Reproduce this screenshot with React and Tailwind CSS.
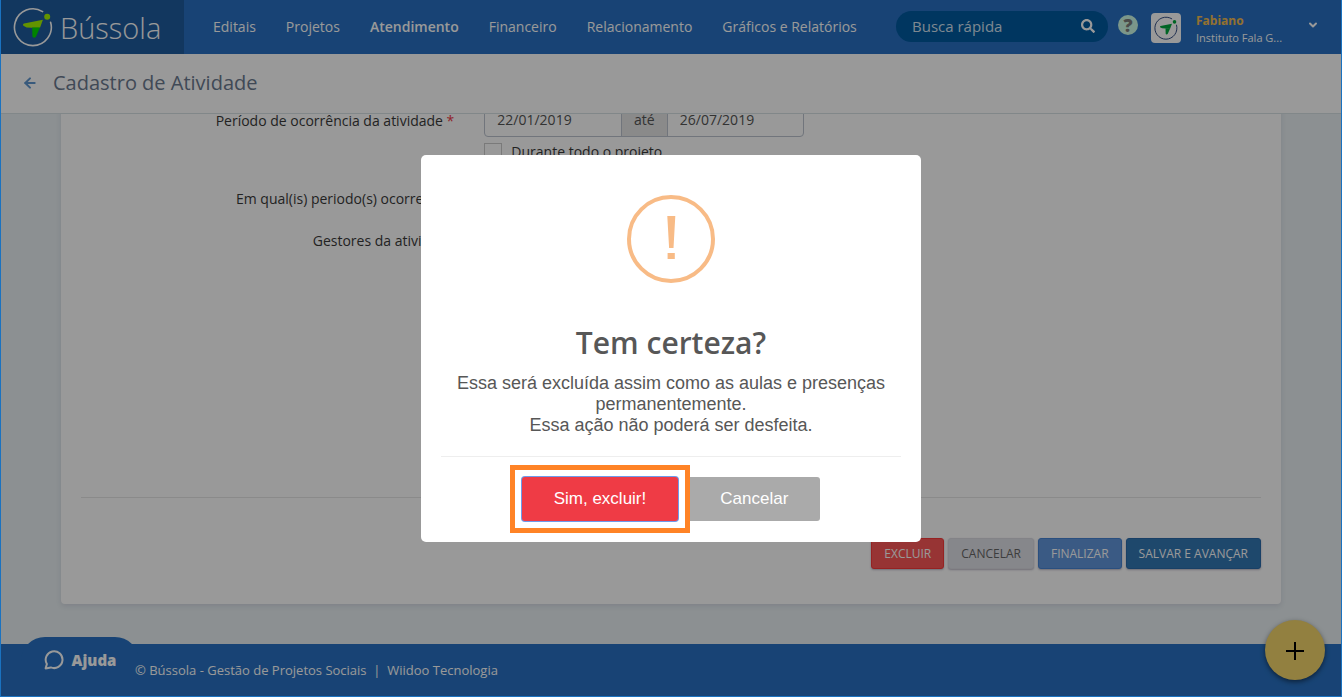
import React from 'react';
import { FaSearch } from 'react-icons/fa';
import { ArrowLeft, ChevronDown } from 'lucide-react';

const navItems = [
  { label: 'Editais' },
  { label: 'Projetos' },
  { label: 'Atendimento', active: true },
  { label: 'Financeiro' },
  { label: 'Relacionamento' },
  { label: 'Gráficos e Relatórios' },
];

const actions = [
  { label: 'Excluir', className: 'bg-[#fc5858] border-[#fa3a3a] text-white' },
  { label: 'Cancelar', className: 'bg-[#e0e1e8] border-[#dadbe2] text-[#666666]' },
  { label: 'Finalizar', className: 'bg-[#6296dc] border-[#4684d4] text-white' },
  { label: 'Salvar e avançar', className: 'bg-[#3378b5] border-[#2a6cab] text-white' },
];

const Compass = ({ className, ring, top, bottom, dot }) => (
  <svg viewBox="0 0 40 40" className={className} fill="none" aria-hidden="true">
    <path
      d="M29.6 4.6A18.4 18.4 0 1 0 37.6 15.2"
      stroke={ring}
      strokeWidth="1.6"
      strokeLinecap="round"
    />
    <path d="M29.9 12.8 11 16.5c-1.3.4-1.3 2-.2 2.6l2.8 1.4 5.6.2h7.8z" fill={top} />
    <path d="M27 20.6h-7.8l.2 8.4c.2 2 2.6 2.2 3.6.4z" fill={bottom} />
    <circle cx="34.2" cy="9.8" r="3" fill={dot} />
  </svg>
);

const Topbar = () => (
  <header className="flex h-[54px] shrink-0 items-center bg-[#2871c3] text-white">
    <a href="#" className="flex h-full w-[184px] shrink-0 items-center gap-[7px] bg-[#1e5c9e] pl-[13px]">
      <Compass className="h-10 w-10" ring="#fff" top="#a6f500" bottom="#00dc00" dot="#a6f500" />
      <span className="text-[29px] font-light leading-none">Bússola</span>
    </a>
    <nav className="flex grow items-center gap-[30px] pl-[29px] text-sm">
      {navItems.map((item) => (
        <a key={item.label} href="#" className={item.active ? 'font-semibold' : ''}>
          {item.label}
        </a>
      ))}
    </nav>
    <div className="flex items-center pb-px">
      <form className="flex h-[31px] w-[212px] items-center rounded-full bg-[#005aa0] pb-px pl-4 pr-[13px]">
        <input
          type="text"
          aria-label="Busca rápida"
          placeholder="Busca rápida"
          className="w-0 grow bg-transparent text-[15px] outline-none placeholder:text-[#d3e3f1]"
        />
        <button type="button" aria-label="Buscar">
          <FaSearch className="h-[14px] w-[14px]" />
        </button>
      </form>
      <button
        type="button"
        aria-label="Dúvidas"
        className="mb-1 ml-[10px] flex h-5 w-5 items-center justify-center rounded-full bg-[#cdfbe6] text-lg font-extrabold leading-none text-[#7c7c7c]"
      >
        ?
      </button>
      <span className="ml-[13px] mt-[2px] flex h-[30px] w-[30px] items-center justify-center rounded-sm bg-white">
        <Compass className="h-6 w-6" ring="#2b4780" top="#00a83c" bottom="#00a83c" dot="#00a83c" />
      </span>
      <div className="ml-[15px] w-[111px] pt-1 leading-[17px]">
        <div className="text-[12px] font-bold text-[#f5bd4f]">Fabiano</div>
        <div className="text-[11px]">Instituto Fala G...</div>
      </div>
      <button type="button" aria-label="Menu do usuário" className="mb-1 mr-[23px]">
        <ChevronDown className="h-3 w-3" strokeWidth={4} />
      </button>
    </div>
  </header>
);

const PageTitle = () => (
  <div className="flex h-[60px] shrink-0 items-center gap-[15px] border-b border-[#d8e2e5] bg-white pb-[2px] pl-[22px]">
    <a href="#" aria-label="Voltar" className="text-[#5f97cf]">
      <ArrowLeft className="h-4 w-4" strokeWidth={3} />
    </a>
    <h1 className="text-xl text-[#6b7a90]">Cadastro de Atividade</h1>
  </div>
);

const Row = ({ label, htmlFor, required, children, className }) => (
  <div className={`-mx-[15px] flex ${className}`}>
    <label htmlFor={htmlFor} className="w-1/3 shrink-0 px-[15px] pt-2 text-right leading-5">
      {label}
      {required && <span className="text-[#f03a47]"> *</span>}
    </label>
    <div className="grow px-[15px]">{children}</div>
  </div>
);

const ActivityForm = () => (
  <form className="flex shrink-0 grow flex-col rounded bg-white px-5 pb-[35px] pt-5 text-sm text-[#3a3a3a] shadow-[0_2px_5px_rgba(90,80,130,0.15)]">
    <Row
      label="Período de ocorrência da atividade"
      htmlFor="inicio"
      className="h-[78px]"
      required
    >
      <div className="flex h-[34px] w-[320px] rounded border border-[#bcc3cf] text-[#555555]">
        <input id="inicio" type="text" defaultValue="22/01/2019" className="w-0 grow px-3" />
        <span className="flex w-[47px] items-center justify-center border-x border-[#bcc3cf] bg-[#e6e6e6]">
          até
        </span>
        <input
          type="text"
          aria-label="Data final"
          defaultValue="26/07/2019"
          className="w-0 grow px-3"
        />
      </div>
      <label className="mt-[5px] flex items-center gap-[9px]">
        <input
          type="checkbox"
          className="h-[18px] w-[18px] appearance-none border border-[#cccccc] bg-white"
        />
        Durante todo o projeto
      </label>
    </Row>
    <Row label="Em qual(is) periodo(s) ocorrerá?" className="h-[42px]" required />
    <Row label="Gestores da atividade" className="h-[42px]" />
    <div className="mt-[232px] flex grow items-end justify-end gap-1 border-t border-[#e6e6e6] pt-10">
      {actions.map((action) => (
        <button
          key={action.label}
          type="button"
          className={`h-[31px] rounded-[3px] border px-3 text-[12px] uppercase shadow-[0_1px_2px_rgba(60,50,90,0.35)] ${action.className}`}
        >
          {action.label}
        </button>
      ))}
    </div>
  </form>
);

const Footer = () => (
  <footer className="relative flex h-[53px] shrink-0 items-center bg-[#2871c3] pl-[135px] text-[13px] text-white">
    <button
      type="button"
      className="absolute -top-[7px] left-[21px] flex h-[46px] w-[118px] items-center justify-center gap-2 rounded-t-3xl bg-[#2871c3] text-[15px] font-extrabold"
    >
      <svg viewBox="0 0 20 20" className="h-5 w-5" fill="none" stroke="currentColor" strokeWidth="2">
        <path d="M1.6 18.4 2.9 14A8.4 8.4 0 1 1 6.8 17.4Z" strokeLinejoin="round" />
      </svg>
      Ajuda
    </button>
    <p className="relative">© Bússola - Gestão de Projetos Sociais &nbsp;|&nbsp; Wiidoo Tecnologia</p>
    <button
      type="button"
      aria-label="Adicionar"
      className="absolute -top-6 right-[17px] flex h-[60px] w-[60px] items-center justify-center rounded-full bg-[#f4d56c] pt-[2px] text-black shadow-[0_2px_5px_rgba(0,0,0,0.5)]"
    >
      <svg viewBox="0 0 18 18" className="h-[18px] w-[18px]" stroke="currentColor" strokeWidth="2">
        <path d="M9 0v18M0 9h18" />
      </svg>
    </button>
  </footer>
);

const ConfirmDialog = () => (
  <div className="fixed inset-0 z-10 flex items-center justify-center bg-black/40">
    <div
      role="dialog"
      aria-modal="true"
      aria-labelledby="confirm-title"
      className="flex w-[500px] flex-col items-center rounded-[5px] bg-white px-5 pb-[9px] pt-10 text-center font-['Liberation_Sans',Arial,sans-serif] text-[#575757]"
    >
      <svg viewBox="0 0 88 88" className="h-[88px] w-[88px]" fill="none" aria-hidden="true">
        <circle cx="44" cy="44" r="42" stroke="#f8bb86" strokeWidth="4" />
        <path d="M40.3 21h8l-1.8 32h-4.4zM40.6 58h7.2v6h-7.2z" fill="#f8bb86" />
      </svg>
      <h2
        id="confirm-title"
        className="mt-[30px] font-['Open_Sans',sans-serif] text-[30px] font-semibold leading-[60px]"
      >
        Tem certeza?
      </h2>
      <p className="text-lg leading-[21px]">
        Essa será excluída assim como as aulas e presenças permanentemente.
        <br />
        Essa ação não poderá ser desfeita.
      </p>
      <hr className="mt-5 w-full border-[#eeeeee]" />
      <div className="mt-2 flex items-center pr-3 text-[17px] text-white">
        <div className="border-[5px] border-[#ff8326] p-[7px]">
          <button
            type="button"
            className="block h-11 rounded-[3px] bg-[#ef3b45] px-8 font-medium ring-1 ring-[#6f9bea]"
          >
            Sim, excluir!
          </button>
        </div>
        <button type="button" className="h-11 rounded-r-[3px] bg-[#aaaaaa] pl-[30px] pr-8 font-medium">
          Cancelar
        </button>
      </div>
    </div>
  </div>
);

const App = () => {
  return (
    <div className="flex h-screen flex-col overflow-hidden bg-[#e9f0f3] font-['Open_Sans',sans-serif]">
      <Topbar />
      <PageTitle />
      <main className="flex min-h-0 grow flex-col justify-end overflow-hidden px-[61px] pb-10">
        <ActivityForm />
      </main>
      <Footer />
      <ConfirmDialog />
      {/* window frame */}
      <div className="pointer-events-none fixed inset-0 z-20 border border-t-0 border-[#1a72c0]" />
    </div>
  );
};

export default App;
